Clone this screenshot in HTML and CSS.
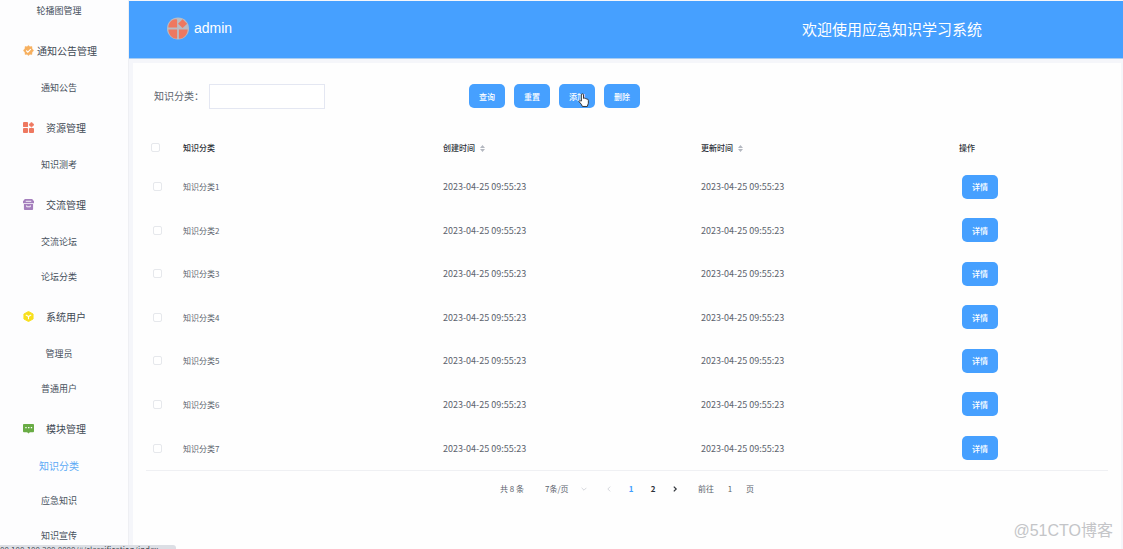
FILE: index.html
```
<!DOCTYPE html>
<html lang="zh-CN">
<head>
<meta charset="utf-8">
<title>应急知识学习系统</title>
<link rel="stylesheet" href="styles.css">
</head>
<body>
<div class="app">
  <nav class="sidebar">
    <div class="menu">
      <a class="sub" href="#">轮播图管理</a>
      <div class="group wide"><svg class="gicon" viewBox="0 0 24 24"><path fill="#f7b05f" stroke="#f7b05f" stroke-linejoin="round" d="M12 1l3.200 2.700 4.200-.4.300 4.200L23 12l-3.300 4.500-.3 4.200-4.200-.4L12 23l-3.200-2.700-4.200.4-.3-4.200L1 12l3.300-4.500.3-4.200 4.200.4z"/><path fill="none" stroke="#fff" stroke-width="2.400" d="M7 12l3.500 3.500L17 9"/></svg><span>通知公告管理</span></div>
      <a class="sub" href="#">通知公告</a>
      <div class="group"><svg class="gicon" viewBox="0 0 24 24"><g fill="#ee7860"><rect width="11" height="11" rx="2"/><rect y="13" width="11" height="11" rx="2"/><rect x="13" y="13" width="11" height="11" rx="2"/><path d="M18.500 0.500L24 5.800 18.500 11 13 5.800z" stroke="#ee7860" stroke-width="1.600" stroke-linejoin="round"/></g></svg><span>资源管理</span></div>
      <a class="sub" href="#">知识测考</a>
      <div class="group"><svg class="gicon" viewBox="0 0 24 24"><path fill="#a57fbd" d="M4 0h16l4 5v4H0V5zM2 11h20v11a2 2 0 0 1-2 2H4a2 2 0 0 1-2-2z"/><path stroke="#fff" stroke-width="2" fill="none" d="M6 5h12M8 14v3h8v-3"/></svg><span>交流管理</span></div>
      <a class="sub" href="#">交流论坛</a>
      <a class="sub" href="#">论坛分类</a>
      <div class="group"><svg class="gicon" viewBox="0 0 24 24"><path fill="#f8df1d" stroke="#f8df1d" stroke-width="2" stroke-linejoin="round" d="M12 1l10 5.500v11L12 23 2 17.500v-11z"/><path fill="none" stroke="#fff" stroke-width="2.400" d="M6 8.500l6 3.500 6-3.500M12 12v6"/></svg><span>系统用户</span></div>
      <a class="sub" href="#">管理员</a>
      <a class="sub" href="#">普通用户</a>
      <div class="group"><svg class="gicon" viewBox="0 0 24 24"><path fill="#69ac45" d="M2 2h20a2 2 0 0 1 2 2v14a2 2 0 0 1-2 2h-7l-3 3-3-3H2a2 2 0 0 1-2-2V4a2 2 0 0 1 2-2z"/><path stroke="#fff" stroke-width="2.600" stroke-dasharray="3 3" d="M5 10h15"/></svg><span>模块管理</span></div>
      <a class="sub active" href="#">知识分类</a>
      <a class="sub" href="#">应急知识</a>
      <a class="sub" href="#">知识宣传</a>
    </div>
  </nav>
  <div class="main">
    <header class="topbar">
      <div class="user">
        <svg class="avatar" viewBox="0 0 24 24"><circle cx="12" cy="12" r="12" fill="#b9bcc4"/><g fill="#ee7860"><path d="M11 3v8H1.500C1.500 6 5 2.500 9 2c1.400 0 2 0 2 1zM1.500 13H11v9c0 1-1 1.200-2 1-4-1-7.500-5-7.500-10zM13 13h9.500c0 5-3.500 9-7.500 10-1 .2-2 0-2-1z"/><path d="M17 1.800l5 4.900L17 11.500l-5-4.800z"/></g></svg>
        <span>admin</span>
      </div>
      <h1 class="welcome">欢迎使用应急知识学习系统</h1>
    </header>
    <main class="card">
      <form class="search">
        <label for="kw">知识分类：</label>
        <input class="kw" id="kw" type="text">
        <div class="actions">
          <button class="btn" type="button">查询</button>
          <button class="btn" type="button">重置</button>
          <button class="btn hovered" type="button">添加<svg class="cursor" viewBox="0 0 20 26"><path fill="#fff" stroke="#333" stroke-width="1.800" stroke-linejoin="round" d="M6 15V3.500a2 2 0 0 1 4 0V10c1-1 3-.7 3.200.6 1-.8 2.800-.3 3 1 1.200-.5 2.800.2 2.800 2V19l-2 6H8l-2-4-4-4.500c-1-1.800.8-3 2.200-2z"/></svg></button>
          <button class="btn" type="button">删除</button>
        </div>
      </form>
      <table class="grid">
        <colgroup><col class="c-check"><col class="c-name"><col class="c-date"><col class="c-date"><col class="c-op"></colgroup>
        <thead>
          <tr><th><input class="tick" type="checkbox" aria-label="全选"></th><th>知识分类</th>
          <th>创建时间<svg class="sort" viewBox="0 0 10 14"><path fill="#b4b8c0" d="M5 0l5 6H0zM5 14l5-6H0z"/></svg></th>
          <th>更新时间<svg class="sort" viewBox="0 0 10 14"><path fill="#b4b8c0" d="M5 0l5 6H0zM5 14l5-6H0z"/></svg></th><th>操作</th></tr>
        </thead>
        <tbody>
          <tr><td><input class="tick" type="checkbox" aria-label="选择 1"></td><td>知识分类1</td><td class="date">2023-04-25 09:55:23</td><td class="date">2023-04-25 09:55:23</td><td><button class="btn" type="button">详情</button></td></tr>
          <tr><td><input class="tick" type="checkbox" aria-label="选择 2"></td><td>知识分类2</td><td class="date">2023-04-25 09:55:23</td><td class="date">2023-04-25 09:55:23</td><td><button class="btn" type="button">详情</button></td></tr>
          <tr><td><input class="tick" type="checkbox" aria-label="选择 3"></td><td>知识分类3</td><td class="date">2023-04-25 09:55:23</td><td class="date">2023-04-25 09:55:23</td><td><button class="btn" type="button">详情</button></td></tr>
          <tr><td><input class="tick" type="checkbox" aria-label="选择 4"></td><td>知识分类4</td><td class="date">2023-04-25 09:55:23</td><td class="date">2023-04-25 09:55:23</td><td><button class="btn" type="button">详情</button></td></tr>
          <tr><td><input class="tick" type="checkbox" aria-label="选择 5"></td><td>知识分类5</td><td class="date">2023-04-25 09:55:23</td><td class="date">2023-04-25 09:55:23</td><td><button class="btn" type="button">详情</button></td></tr>
          <tr><td><input class="tick" type="checkbox" aria-label="选择 6"></td><td>知识分类6</td><td class="date">2023-04-25 09:55:23</td><td class="date">2023-04-25 09:55:23</td><td><button class="btn" type="button">详情</button></td></tr>
          <tr><td><input class="tick" type="checkbox" aria-label="选择 7"></td><td>知识分类7</td><td class="date">2023-04-25 09:55:23</td><td class="date">2023-04-25 09:55:23</td><td><button class="btn" type="button">详情</button></td></tr>
        </tbody>
      </table>
      <div class="pager">
        <span>共 8 条</span>
        <div class="size"><select class="select" aria-label="每页条数"><option>7条/页</option></select><svg class="chev" viewBox="0 0 10 10"><path d="M1 3l4 4 4-4"/></svg></div>
        <div class="pages">
          <button class="pg off" type="button" aria-label="上一页"><svg class="chev" viewBox="0 0 10 10"><path d="M7 1L3 5l4 4"/></svg></button>
          <button class="pg current" type="button">1</button>
          <button class="pg" type="button">2</button>
          <button class="pg" type="button" aria-label="下一页"><svg class="chev dark" viewBox="0 0 10 10"><path d="M3 1l4 4-4 4"/></svg></button>
        </div>
        <label class="jump">前往<input class="goto" type="text" value="1">页</label>
      </div>
    </main>
  </div>
</div>
<div class="status">00.100.100.200:8080/#/classification/index</div>
<div class="watermark">@51CTO博客</div>
</body>
</html>
```
FILE: styles.css
```
* { box-sizing: border-box; }
body {
  margin: 0;
  height: 100vh;
  overflow: hidden;
  background: #fdfdfe;
  color: #5c636d;
  font-family: "Noto Sans CJK SC", sans-serif;
  font-size: 8px;
}
button, input, select { font: inherit; color: inherit; }
.app { display: flex; height: 100vh; }
.sidebar {
  flex: 0 0 129px;
  overflow: hidden;
  border-right: 1px solid #eeeff3;
}
.menu { margin-top: -7px; }
.sub {
  display: flex;
  align-items: center;
  justify-content: center;
  height: 35px;
  padding-right: 10px;
  color: #46505c;
  font-size: 9px;
  text-decoration: none;
}
.sub.active { color: #5ba9f5; font-size: 10px; }
.group {
  display: flex;
  align-items: center;
  gap: 12px;
  height: 42px;
  padding: 2px 0 0 23px;
  color: #3f4954;
  font-size: 10px;
}
.group.wide { gap: 3px; }
.gicon { width: 11px; height: 11px; }
.main {
  flex: 1;
  display: flex;
  flex-direction: column;
  min-width: 0;
  padding-top: 1px;
  background: #f5f6fa;
}
.topbar {
  display: flex;
  align-items: center;
  justify-content: space-between;
  height: 58px;
  padding: 0 141px 3px 38px;
  background: #46a0ff;
  border-bottom: 1px solid #a9cdf2;
  color: #fff;
}
.user {
  display: flex;
  align-items: center;
  gap: 5px;
  font: 14px "Liberation Sans", sans-serif;
}
.avatar { width: 22px; height: 23px; }
.welcome { margin: 0; font-size: 15px; font-weight: 400; }
.card {
  flex: 1;
  margin: 4px 2px 0 4px;
  padding: 21px 13px 0;
  background: #fefefe;
}
.search { display: flex; align-items: flex-start; padding-left: 8px; }
.search label { width: 55px; font-size: 10px; line-height: 24px; white-space: nowrap; }
.kw {
  width: 116px;
  height: 25px;
  border: 1px solid #e4e7f2;
  background: #fff;
}
.actions { display: flex; gap: 9px; margin-left: 144px; }
.btn {
  display: inline-block;
  width: 36px;
  height: 24px;
  padding: 0;
  border: 0;
  border-radius: 5px;
  background: #46a0ff;
  color: #fff;
  font-size: 8px;
  font-weight: 500;
}
.hovered { position: relative; }
.cursor { position: absolute; left: 19px; top: 9px; width: 11px; height: 14px; }
.grid {
  width: 100%;
  height: 341px;
  margin-top: 21px;
  border-collapse: collapse;
  border-bottom: 1px solid #eff0f3;
  table-layout: fixed;
}
.c-check { width: 37px; }
.c-name { width: 260px; }
.c-date { width: 258px; }
.c-op { width: 149px; }
.grid th, .grid td { padding: 0; text-align: left; vertical-align: middle; }
.grid th { height: 35px; color: #2c3138; font-weight: 500; }
.grid td:first-child { padding-left: 7px; }
.grid th:first-child { padding-left: 5px; }
.grid td:last-child { padding-left: 3px; }
.grid .date { font-size: 9px; }
.tick {
  display: block;
  appearance: none;
  width: 9px;
  height: 9px;
  margin: 0;
  border: 1px solid #e6e8ec;
  border-radius: 2px;
  background: #fff;
}
.sort { width: 5px; height: 7px; margin-left: 5px; vertical-align: middle; }
.pager {
  display: flex;
  align-items: center;
  justify-content: center;
  height: 35px;
}
.size { display: flex; align-items: center; margin-left: 21px; }
.select { width: 36px; padding: 0; border: 0; background: none; appearance: none; }
.chev { width: 6px; height: 6px; fill: none; stroke: #b8bcc4; stroke-width: 1; }
.chev.dark { stroke: #30343a; stroke-width: 2; }
.pages { display: flex; margin-left: 11px; }
.pg {
  width: 22px;
  height: 18px;
  padding: 0;
  border: 0;
  background: none;
  color: #2c3138;
  font-weight: 700;
}
.pg.current { color: #409eff; }
.jump { display: flex; align-items: center; margin-left: 12px; }
.goto { width: 32px; padding: 0; border: 0; background: none; text-align: center; }
.status {
  position: absolute;
  left: 0;
  bottom: 0;
  width: 176px;
  height: 4px;
  overflow: hidden;
  border-radius: 0 3px 0 0;
  background: #dcdfe5;
  color: #454a52;
  font-size: 8px;
  line-height: 10px;
  white-space: nowrap;
}
.watermark {
  position: absolute;
  right: 10px;
  bottom: 8px;
  color: #c4c5c8;
  font: 16px "Liberation Sans", "Noto Sans CJK SC", sans-serif;
}
```
